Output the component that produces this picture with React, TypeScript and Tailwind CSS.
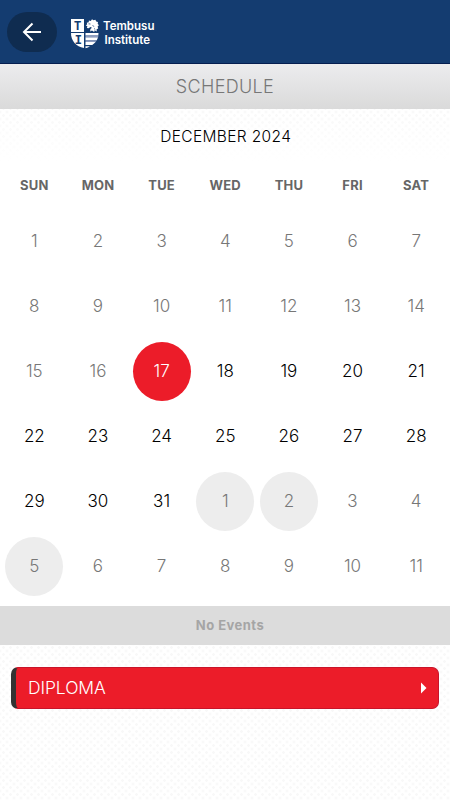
import { useState } from 'react'
import clsx from 'clsx'

const WEEKDAYS = ['SUN', 'MON', 'TUE', 'WED', 'THU', 'FRI', 'SAT']

type DayState = 'muted' | 'normal' | 'today' | 'marked'

interface Day {
  id: string
  label: number
  state: DayState
}

const TODAY = 17
const MARKED_NEXT = [1, 2, 5]

const DAYS: Day[] = Array.from({ length: 42 }, (_, i) => {
  if (i < 31) {
    const label = i + 1
    const state = label < TODAY ? 'muted' : label === TODAY ? 'today' : 'normal'
    return { id: `dec-${label}`, label, state }
  }
  const label = i - 30
  return { id: `jan-${label}`, label, state: MARKED_NEXT.includes(label) ? 'marked' : 'muted' }
})

const DOTS =
  'bg-[radial-gradient(circle,#f8f8f8_1px,transparent_1.5px),radial-gradient(circle,#f8f8f8_1px,transparent_1.5px)] bg-[length:7px_7px] bg-[position:0_0,3.5px_3.5px]'

function Logo() {
  return (
    <div className="flex items-center gap-[4px]">
      <svg width="28" height="30" viewBox="0 0 28 30" fill="#fff">
        <path d="M0 0h13v13H0z" />
        <path d="M0 14h13v15C5 27.500 0 22 0 14z" />
        <path d="M14.800 6.500l1.400-1.200-.4-1.500 1.900-.5.2-1.700 1.900.3L21 .3l1.500 1L24.400.8l.8 1.700 1.800.4-.3 1.900 1.200 1.500-1.300 1.300.6 1.900-1.600.8.2 2.200-2.200-1.300-.4 1.900-2.200-1.500-1.800 1 .2-2.700 1.600-1.100-1.700-.8-1.500 1.200-1.900-.3.500-1.600z" />
        <path d="M14.500 14H27.500l-.2 2.500H14.500zM14.500 18.200H27q-.4 1.700-1.200 3.100H14.500zM14.500 23H24.600q-1.400 1.700-3.400 3.100H14.500zM14.500 27.300h4.500q-2 1.300-4.500 1.900z" />
        <path d="M14.500 16.500H27.300V18.200H14.500zM14.500 21.300h11.300l-1.200 1.700H14.500z" fill="#8d9cc0" />
        <path d="M17.500 4.800l2 .2M21.500 6.500l1.700 1M23 9.500l1.200.8" stroke="#143c70" strokeWidth=".7" />
        <text x="6.600" y="10.500" textAnchor="middle" fill="#143c70" fontFamily="Liberation Mono, monospace" fontWeight="700" fontSize="12">T</text>
        <text x="7.300" y="24.500" textAnchor="middle" fill="#143c70" fontFamily="Liberation Mono, monospace" fontWeight="700" fontSize="12">I</text>
      </svg>
      <div className="text-[11.500px] leading-[13.500px] font-semibold text-white">
        <div>Tembusu</div>
        <div className="pl-[1.500px]">Institute</div>
      </div>
    </div>
  )
}

function Header() {
  return (
    <header className="flex h-16 items-center border-b border-[#051e50] bg-[#143c70] pl-[7px]">
      <button className="flex h-10 w-[50px] items-center justify-center rounded-full bg-[#0f2c50]">
        <svg width="20" height="20" viewBox="0 0 20 20" fill="none" stroke="#fff" strokeWidth="2">
          <path d="M19 10H2M10.500 1.500L2 10l8.500 8.500" />
        </svg>
      </button>
      <div className="pt-[4px] pl-[14px]">
        <Logo />
      </div>
    </header>
  )
}

function DayCell({ day, onSelect }: { day: Day; onSelect: () => void }) {
  return (
    <div className="flex h-[65px] items-center justify-center">
      <button
        onClick={onSelect}
        className={clsx(
          'flex h-[59px] w-[58px] items-center justify-center rounded-[50%] text-[17px]',
          day.state === 'muted' && 'font-light text-[#777]',
          day.state === 'marked' && 'bg-[#ededed] font-light text-[#777]',
          day.state === 'normal' && 'font-[350] text-black',
          day.state === 'today' && 'bg-[#ec1c29] font-[350] text-white'
        )}
      >
        {day.label}
      </button>
    </div>
  )
}

export default function App() {
  const [, setSelected] = useState('dec-17')

  return (
    <div className={clsx('min-h-screen bg-white font-[Inter,sans-serif]', DOTS)}>
      <Header />
      <h1 className="flex h-[45px] items-center justify-center bg-linear-to-b from-[#ececee] to-[#dadada] text-[18px] font-light tracking-[0.35px] text-[#777]">
        SCHEDULE
      </h1>

      <section className="h-[497px] bg-linear-to-b from-transparent to-white to-[52px] pr-[2px] pl-[2.500px]">
        <h2 className="flex h-[55px] items-center justify-center pl-px text-[15.500px] font-light tracking-[0.350px] text-black">
          DECEMBER 2024
        </h2>
        <div className="grid h-[45px] grid-cols-7 items-center pb-px text-center text-[13px] font-bold tracking-[0.2px] text-[#666]">
          {WEEKDAYS.map((name) => (
            <div key={name}>{name}</div>
          ))}
        </div>
        <div className="grid grid-cols-7">
          {DAYS.map((day) => (
            <DayCell key={day.id} day={day} onSelect={() => setSelected(day.id)} />
          ))}
        </div>
      </section>

      <div className="flex h-[39px] items-center justify-center bg-[#dcdcdc] pl-[10px] text-[13px] font-bold tracking-[0.45px] text-[#a5a5a5]">
        No Events
      </div>

      <div className="px-[11px] pt-[22px]">
        <button className="flex h-[42px] w-full items-center justify-between rounded-[7px] border border-l-[5px] border-[#c8142a] border-l-[#333] bg-[#ec1c29] pr-[11px] pl-[12px] text-[17.500px] font-light tracking-[-0.1px] text-white">
          DIPLOMA
          <svg width="6" height="12" viewBox="0 0 6 12" fill="#fff">
            <path d="M0 .5L5.500 6 0 11.500z" />
          </svg>
        </button>
      </div>
    </div>
  )
}
